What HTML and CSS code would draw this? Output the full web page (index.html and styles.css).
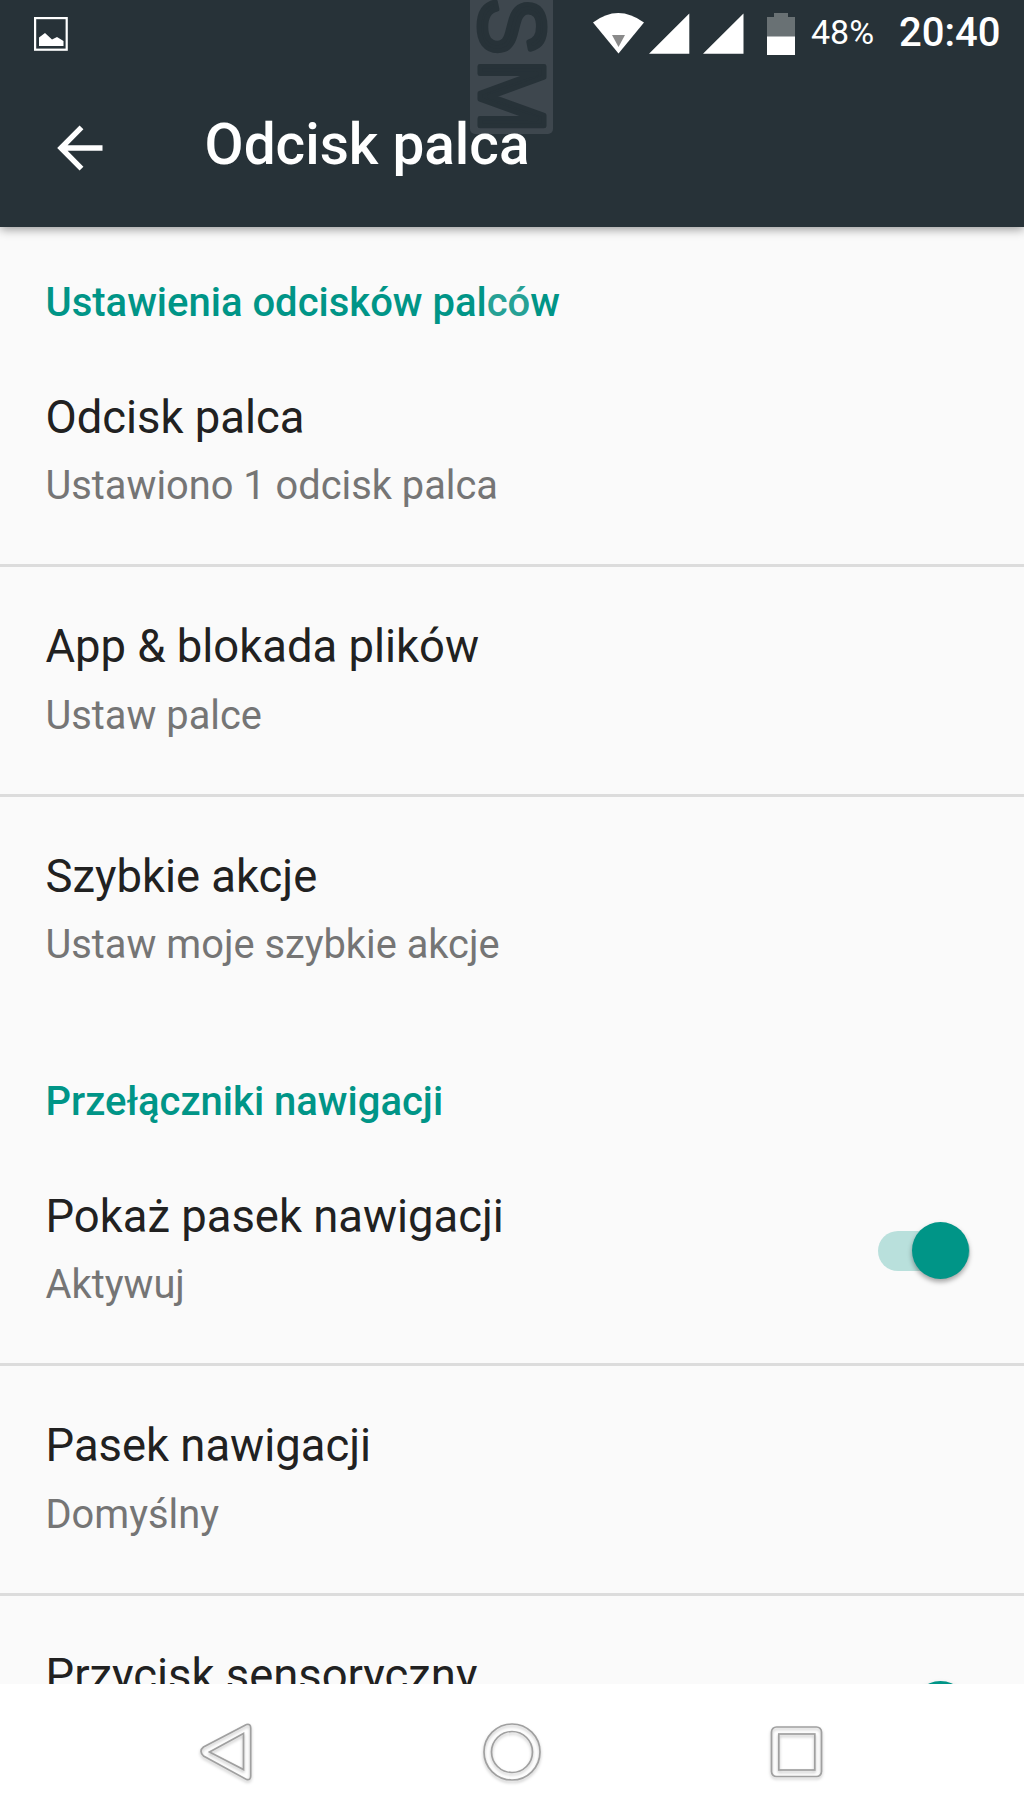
FILE: index.html
```html
<!DOCTYPE html>
<html lang="pl">
<head>
<meta charset="utf-8">
<title>Odcisk palca</title>
<link rel="stylesheet" href="styles.css">
</head>
<body>
<div class="screen">
  <header class="top">
    <svg class="watermark" width="84" height="136" viewBox="0 0 84 136" aria-hidden="true">
      <rect class="mark-plate" x="0" y="-20" width="83" height="154" rx="5"/>
      <text class="mark-text" transform="translate(10 0) rotate(90)"><tspan x="-2.3" textLength="57" lengthAdjust="spacingAndGlyphs">S</tspan><tspan x="59" textLength="74.2" lengthAdjust="spacingAndGlyphs">M</tspan></text>
    </svg>
    <div class="status">
      <svg class="picture-icon" width="36" height="36" viewBox="0 0 36 36">
        <rect x="1.1" y="1.1" width="31.6" height="31.6" fill="none" stroke="#fff" stroke-width="2.2"/>
        <path fill="#fff" d="M5 29V20.500L11 16 18 22.500 23 20 29.500 24V29Z"/>
      </svg>
      <svg class="signals" width="204" height="44" viewBox="0 0 204 44">
        <path fill="#fff" d="M0 9.500Q25 -9.500 51 9.500L25.500 40.500Z"/>
        <path fill="#8a8a8a" d="M19 22H32L25.500 34Z"/>
        <path fill="#fff" d="M56 40.700 96.300 0.500V40.700ZM110 40.700 150.500 0.500V40.700Z"/>
        <path fill="#697174" d="M181 0H195V4H202V24H174V4H181Z"/>
        <path fill="#fff" d="M174 23.500H202V42H174Z"/>
      </svg>
      <span class="battery">48%</span>
      <span class="clock">20:40</span>
    </div>
    <div class="toolbar">
      <svg class="back" width="46" height="46" viewBox="0 0 46 46" fill="none" stroke="#fff" stroke-width="5.400"><path d="M24.500 2.300 4 23 24.500 43.700M4 23H45.500"/></svg>
      <h1 class="title">Odcisk palca</h1>
    </div>
  </header>
  <main class="list">
    <h2 class="category">Ustawienia odcisków pal<span class="faded">có</span>w</h2>
    <section class="row ruled"><div><div class="name">Odcisk palca</div><div class="summary">Ustawiono 1 odcisk palca</div></div></section>
    <section class="row ruled"><div><div class="name">App &amp; blokada plików</div><div class="summary">Ustaw palce</div></div></section>
    <section class="row"><div><div class="name">Szybkie akcje</div><div class="summary">Ustaw moje szybkie akcje</div></div></section>
    <h2 class="category">Przełączniki nawigacji</h2>
    <section class="row ruled"><div><div class="name">Pokaż pasek nawigacji</div><div class="summary">Aktywuj</div></div><div class="switch"><div class="thumb"></div></div></section>
    <section class="row ruled"><div><div class="name">Pasek nawigacji</div><div class="summary">Domyślny</div></div></section>
    <section class="row"><div><div class="name">Przycisk sensoryczny</div></div><div class="switch"><div class="thumb"></div></div></section>
  </main>
  <nav class="navbar">
    <svg class="nav-icon" width="60" height="64" viewBox="0 0 60 64"><path d="M49.500 4.500 6.500 27Q1.500 31 6.500 36L49.500 59.500Q53.700 60.500 53.700 56V8Q53.700 3.500 49.500 4.500ZM46.500 13.500V49.500L12.500 32Z"/></svg>
    <svg class="nav-icon" width="60" height="64" viewBox="0 0 60 64"><circle cx="30" cy="32" r="28"/><circle cx="30" cy="32" r="20.500"/></svg>
    <svg class="nav-icon" width="60" height="64" viewBox="0 0 60 64"><rect x="4.500" y="7" width="50" height="49.500" rx="5"/><rect x="11.800" y="14" width="36" height="36"/></svg>
  </nav>
</div>
</body>
</html>
```
FILE: styles.css
```css
* { box-sizing: border-box; }
body { margin: 0; background: #fff; font-family: Roboto, sans-serif; }
.screen { width: 1024px; height: 1820px; display: flex; flex-direction: column; overflow: hidden; }
.top { position: relative; z-index: 1; flex: none; height: 227px; background: #273238; color: #fff; box-shadow: 0 2px 10px rgba(0,0,0,.42); }
.watermark { position: absolute; left: 470px; top: 0; overflow: hidden; }
.mark-plate { fill: #3e474e; }
.mark-text { font: 93px "Liberation Sans", sans-serif; fill: #273238; stroke: #273238; stroke-width: 5px; stroke-linejoin: round; }
.status { position: relative; display: flex; height: 66px; padding: 13px 23px 0 34px; }
.picture-icon { margin-top: 4px; }
.signals { margin-left: auto; flex: none; }
.battery { width: 66px; margin-left: 14px; font-size: 34px; line-height: 38px; white-space: nowrap; }
.clock { width: 102px; margin-left: 22px; font-size: 40px; font-weight: 500; line-height: 40px; white-space: nowrap; }
.toolbar { position: relative; display: flex; padding: 45px 0 0 57px; }
.back { margin-top: 14px; }
.title { margin: 0 0 0 101.6px; font-size: 56.7px; font-weight: 500; line-height: 67px; }
.list { flex: 1; min-height: 0; overflow: hidden; background: #fafafa; }
.category { margin: 0; height: 110.5px; padding: 52px 45px 0 45.5px; font-size: 40px; font-weight: 500; line-height: 47px; color: #009587; }
.faded { color: #26a195; }
.row { display: flex; justify-content: space-between; height: 229.5px; padding: 53px 54px 0 45.5px; }
.ruled { border-bottom: 3px solid #dcdcdc; }
.name { font-size: 45.4px; line-height: 53px; color: #212121; }
.summary { margin-top: 18.5px; font-size: 39.8px; line-height: 47px; color: #757575; }
.switch { width: 92px; height: 40px; margin-top: 41px; border-radius: 20px; background: #b9e0dc; display: flex; justify-content: flex-end; align-items: center; }
.thumb { flex: none; width: 57px; height: 57px; margin-right: 1px; border-radius: 50%; background: #009587; box-shadow: 0 3px 5px rgba(0,0,0,.35); }
.navbar { flex: none; height: 136px; padding: 36px 197px 0; display: flex; justify-content: space-between; background: #fff; }
.nav-icon { fill: none; stroke: #a0a0a0; stroke-width: 1.7px; filter: drop-shadow(0 2px 1.5px rgba(0,0,0,.25)); }
```
